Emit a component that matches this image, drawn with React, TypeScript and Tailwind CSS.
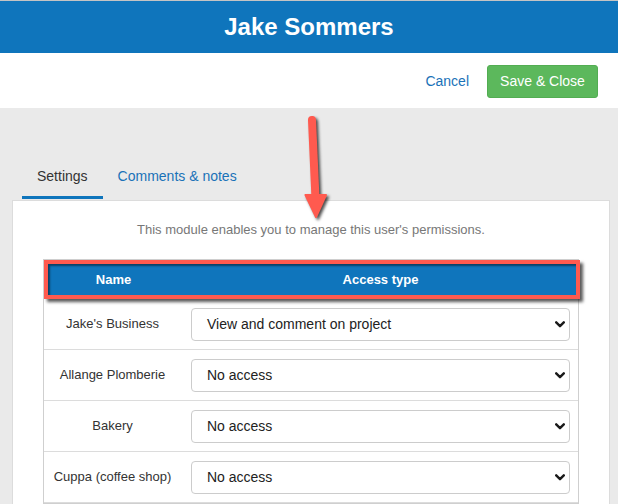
import React from "react";

const rows = [
  { name: "Jake's Business", access: "View and comment on project" },
  { name: "Allange Plomberie", access: "No access" },
  { name: "Bakery", access: "No access" },
  { name: "Cuppa (coffee shop)", access: "No access" },
];

function Chevron() {
  return (
    <svg width="10" height="7" viewBox="0 0 10 7" className="shrink-0">
      <path d="M1.2 1.3 L5 5.2 L8.8 1.3" fill="none" stroke="#1a1a1a" strokeWidth="2.4" strokeLinecap="round" strokeLinejoin="round" />
    </svg>
  );
}

export default function App() {
  return (
    <div
      className="relative w-[618px] h-[504px] overflow-hidden bg-[#eaeaea]"
      style={{ fontFamily: '"Liberation Sans", Arial, sans-serif' }}
    >
      <div className="h-px bg-[#c4c4c4]" />
      <div className="h-[52px] bg-[#0f75bc] flex items-center justify-center">
        <h1 className="text-white text-[24px] font-bold leading-none">Jake Sommers</h1>
      </div>
      <div className="h-[55px] bg-white flex items-start justify-end pt-[12px] pr-[20px]">
        <a className="text-[14px] leading-[33px] text-[#1a72b8] mr-[18px]">Cancel</a>
        <button className="h-[33px] w-[111px] rounded-[3px] bg-[#5cb85c] border border-[#52ad52] text-white text-[14px]">
          Save &amp; Close
        </button>
      </div>

      <div className="mt-[48px] flex pl-[22px]">
        <div className="px-[15px] pt-[10px] pb-[10px] border-b-[3px] border-[#0f75bc] text-[14px] leading-[20px] text-[#333]">
          Settings
        </div>
        <div className="px-[15px] pt-[10px] pb-[10px] border-b-[3px] border-transparent text-[14px] leading-[20px] text-[#1a72b8]">
          Comments &amp; notes
        </div>
      </div>

      <div className="mt-px ml-[12px] w-[598px] h-[400px] bg-white border border-[#dcdcdc]">
        <p className="pt-[21px] text-center text-[13px] leading-[16px] text-[#777]">
          This module enables you to manage this user's permissions.
        </p>
        <div className="mt-[21px] mx-[30px] border border-[#cfcfcf]">
          <div className="-mr-[2px] h-[39px] flex items-center bg-[#0f75bc] border-[4px] border-[#ff5a4f] shadow-[3px_3px_3px_rgba(0,0,0,0.65),inset_2px_2px_2px_rgba(0,0,0,0.45)] text-white text-[13px] font-bold">
            <div className="w-[131px] text-center">Name</div>
            <div className="flex-1 pl-[6px] text-center">Access type</div>
          </div>
          {rows.map((r) => (
            <div key={r.name} className="h-[51px] flex items-center border-b border-[#dcdcdc]">
              <div className="w-[137px] text-center text-[13px] text-[#333]">{r.name}</div>
              <div className="flex-1 pl-[10px] pr-[8px]">
                <div className="h-[33px] flex items-center justify-between rounded-[4px] border border-[#cccccc] bg-white pl-[15px] pr-[4px]">
                  <span className="text-[14px] text-[#222]">{r.access}</span>
                  <Chevron />
                </div>
              </div>
            </div>
          ))}
        </div>
      </div>

      <svg
        className="absolute left-[290px] top-[105px]"
        width="50"
        height="120"
        viewBox="0 0 50 120"
        style={{ filter: "drop-shadow(2px 2px 1.5px rgba(0,0,0,0.7))" }}
      >
        <line x1="22" y1="15" x2="25.5" y2="94" stroke="#ff5a4f" strokeWidth="8" strokeLinecap="round" />
        <polygon points="15.5,90 36,90 26,112" fill="#ff5a4f" stroke="#ff5a4f" strokeWidth="2" strokeLinejoin="round" />
      </svg>
    </div>
  );
}
